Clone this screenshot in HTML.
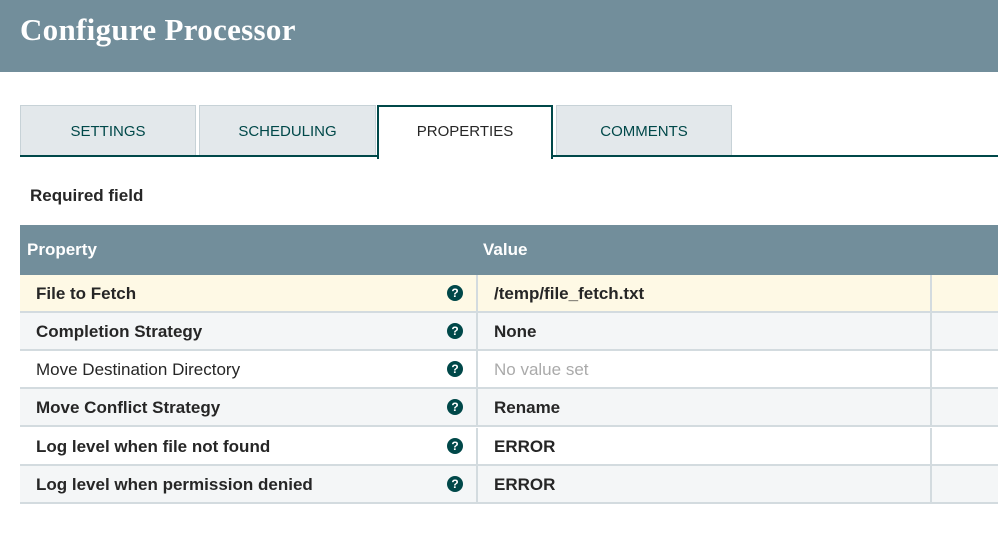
<!DOCTYPE html>
<html><head><style>
*{margin:0;padding:0;box-sizing:border-box}
body{width:998px;height:551px;overflow:hidden;background:#fff;font-family:"Liberation Sans",sans-serif;position:relative}
.hdr{position:absolute;left:0;top:0;width:998px;height:72px;background:#728e9b}
.hdr h1{position:absolute;left:20px;top:12px;font-family:"Liberation Serif",serif;font-weight:bold;font-size:31px;color:#fff;letter-spacing:0.3px}
.tab{position:absolute;top:105px;height:50px;background:#e3e8eb;border:1px solid #c7d2d7;border-bottom:none;color:#004849;font-size:15px;text-align:center;line-height:52px}
.tabline{position:absolute;left:20px;top:155px;width:978px;height:2px;background:#004849}
.tab.act{background:#fff;border:2px solid #004849;border-bottom:none;color:#262626;height:54px;z-index:2;line-height:50px}
.req{position:absolute;left:30px;top:186px;font-size:17px;font-weight:bold;color:#262626}
.th{position:absolute;left:20px;top:225px;width:978px;height:50px;background:#728e9b;color:#fff;font-weight:bold;font-size:17px}
.th span{position:absolute;top:15px}
.row{position:absolute;left:20px;width:978px;height:38px;border-bottom:2px solid #d3dbdf;font-size:17px;color:#262626}
.row .n{position:absolute;left:16px;top:9px}
.row .v{position:absolute;left:474px;top:9px}
.row .d1{position:absolute;left:456px;top:0;width:2px;height:38px;background:#d3dbdf}
.row .d2{position:absolute;left:910px;top:0;width:2px;height:38px;background:#d3dbdf}
.q{position:absolute;left:427px;top:10px;width:16px;height:16px;border-radius:50%;background:#004849;color:#fff;font-size:12px;font-weight:bold;text-align:center;line-height:16px}
b{font-weight:bold}
</style></head><body>
<div class="hdr"><h1>Configure Processor</h1></div>
<div class="tabline"></div>
<div class="tab" style="left:20px;width:176px">SETTINGS</div>
<div class="tab" style="left:199px;width:177px">SCHEDULING</div>
<div class="tab act" style="left:377px;width:176px">PROPERTIES</div>
<div class="tab" style="left:556px;width:176px">COMMENTS</div>
<div class="req">Required field</div>
<div class="th"><span style="left:7px">Property</span><span style="left:463px">Value</span></div>
<div class="row" style="top:275px;background:#fef9e5"><b class="n">File to Fetch</b><div class="q">?</div><div class="d1"></div><b class="v">/temp/file_fetch.txt</b><div class="d2"></div></div>
<div class="row" style="top:313px;background:#f4f6f7"><b class="n">Completion Strategy</b><div class="q">?</div><div class="d1"></div><b class="v">None</b><div class="d2"></div></div>
<div class="row" style="top:351px;background:#fff"><span class="n">Move Destination Directory</span><div class="q">?</div><div class="d1"></div><span class="v" style="color:#aaa">No value set</span><div class="d2"></div></div>
<div class="row" style="top:389px;background:#f4f6f7"><b class="n">Move Conflict Strategy</b><div class="q">?</div><div class="d1"></div><b class="v">Rename</b><div class="d2"></div></div>
<div class="row" style="top:428px;background:#fff"><b class="n">Log level when file not found</b><div class="q">?</div><div class="d1"></div><b class="v">ERROR</b><div class="d2"></div></div>
<div class="row" style="top:466px;background:#f4f6f7"><b class="n">Log level when permission denied</b><div class="q">?</div><div class="d1"></div><b class="v">ERROR</b><div class="d2"></div></div>
</body></html>
